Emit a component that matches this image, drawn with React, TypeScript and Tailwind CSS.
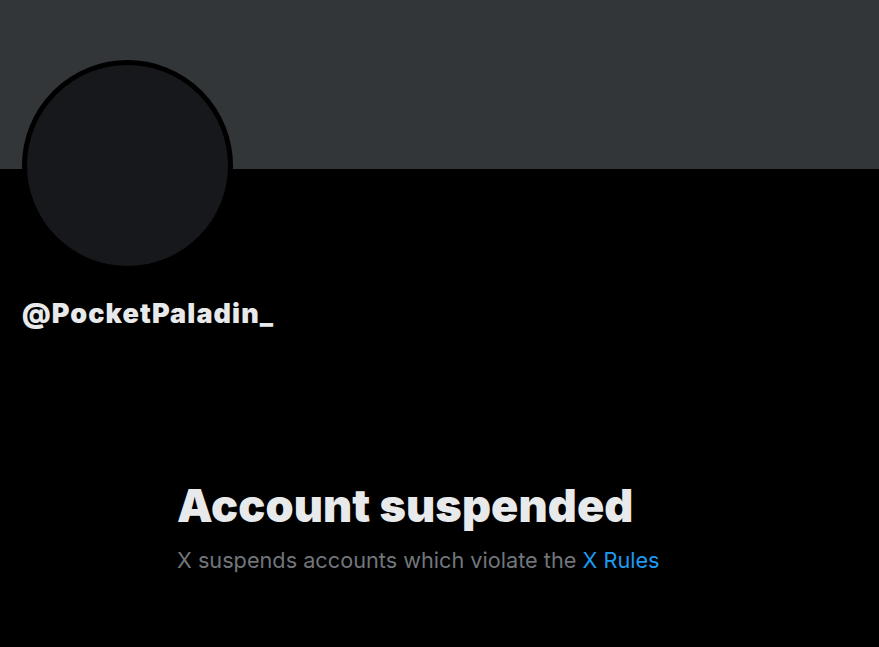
export default function App() {
  return (
    <div
      className="min-h-[647px] w-full bg-black text-[#e7e9ea]"
      style={{ fontFamily: "Inter, 'Liberation Sans', sans-serif" }}
    >
      <div className="h-[169px] w-full bg-[#333639]" />
      <div className="px-[22px]">
        <div className="-mt-[109px] h-[211px] w-[211px] rounded-full border-[5px] border-black bg-[#16181c]" />
        <div className="mt-[27px] text-[27px] font-black leading-[32px] tracking-[1.1px]">@PocketPaladin_</div>
      </div>
      <div className="mt-[150px] pl-[177px]">
        <h1 className="text-[45px] font-black leading-[52px] tracking-[0.1px]">Account suspended</h1>
        <p className="mt-[14px] text-[21.7px] leading-[28px] text-[#71767b]">
          X suspends accounts which violate the{" "}
          <span className="text-[#1d9bf0]">X Rules</span>
        </p>
      </div>
    </div>
  );
}
